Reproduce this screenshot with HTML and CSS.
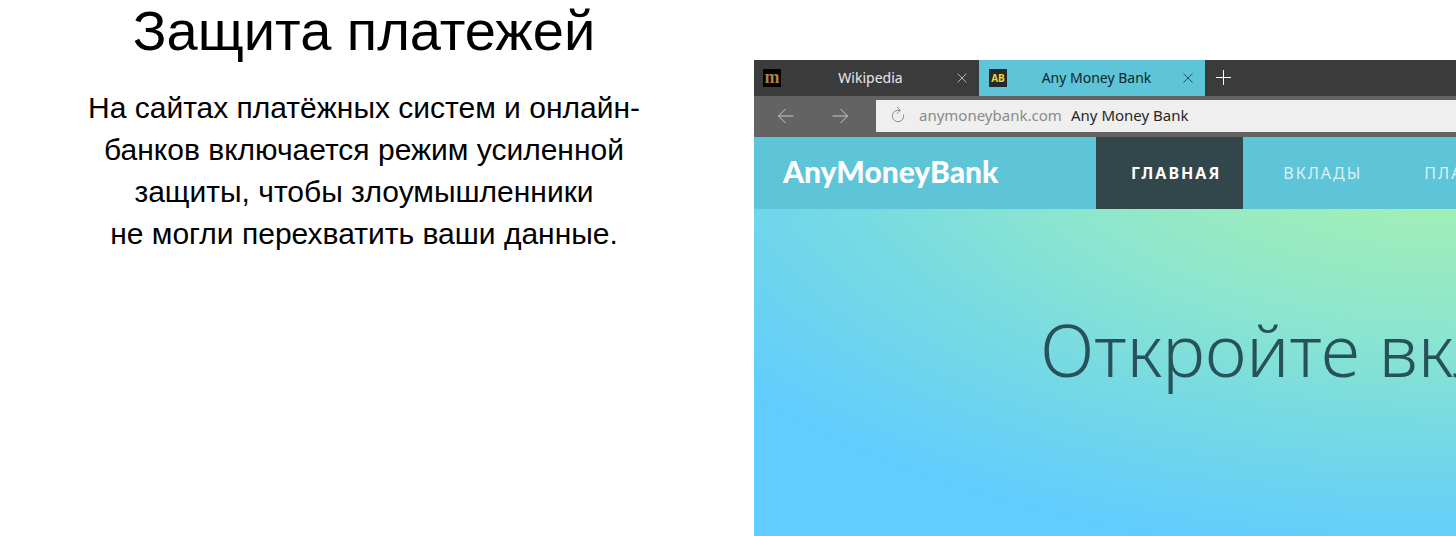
FILE: index.html
```html
<!DOCTYPE html>
<html lang="ru">
<head>
<meta charset="utf-8">
<meta name="viewport" content="width=device-width, initial-scale=1">
<title>Защита платежей</title>
<link rel="stylesheet" href="styles.css">
</head>
<body>
<main class="feature">
  <section class="intro">
    <h1 class="intro-title">Защита платежей</h1>
    <p class="intro-text">На сайтах платёжных систем и онлайн-<br>банков включается режим усиленной<br>защиты, чтобы злоумышленники<br>не&nbsp;могли перехватить ваши данные.</p>
  </section>
  <section class="browser" aria-label="Any Money Bank">
    <div class="tabs">
      <div class="tab">
        <span class="favicon favicon-m">m</span>
        <span class="tab-title">Wikipedia</span>
        <button class="icon-button close" aria-label="Закрыть вкладку"><svg width="12" height="12" viewBox="0 0 12 12"><path d="M1.500 1.500l9 9M10.500 1.500l-9 9"/></svg></button>
      </div>
      <div class="tab tab-active">
        <span class="favicon favicon-ab">AB</span>
        <span class="tab-title">Any Money Bank</span>
        <button class="icon-button close" aria-label="Закрыть вкладку"><svg width="12" height="12" viewBox="0 0 12 12"><path d="M1.500 1.500l9 9M10.500 1.500l-9 9"/></svg></button>
      </div>
      <button class="icon-button new-tab" aria-label="Новая вкладка"><svg width="16" height="16" viewBox="0 0 16 16"><path d="M8.500 0v15M1 7.500h15"/></svg></button>
    </div>
    <div class="toolbar">
      <button class="icon-button arrow" aria-label="Назад"><svg width="18" height="16" viewBox="0 0 18 16"><path d="M16.500 8H1.500M8.500 1L1.500 8l7 7"/></svg></button>
      <button class="icon-button arrow" aria-label="Вперёд"><svg width="18" height="16" viewBox="0 0 18 16"><path d="M1.500 8h15M9.500 1l7 7-7 7"/></svg></button>
      <div class="address">
        <button class="icon-button reload" aria-label="Обновить"><svg width="14" height="17" viewBox="0 0 14 17"><path d="M12.500 8.500A5.700 5.700 0 1 1 7 4.300h2.200M6 1L9.300 4.300L6 7.600"/></svg></button>
        <input class="url" type="text" value="anymoneybank.com" aria-label="Адрес">
        <span class="page-name">Any Money Bank</span>
      </div>
    </div>
    <header class="site-header">
      <a class="logo" href="#">AnyMoneyBank</a>
      <nav class="menu">
        <a class="menu-link menu-current" href="#">ГЛАВНАЯ</a>
        <a class="menu-link" href="#">ВКЛАДЫ</a>
        <a class="menu-link" href="#">ПЛАТЕЖИ</a>
      </nav>
    </header>
    <div class="hero">
      <h2 class="hero-title">Откройте вклад</h2>
    </div>
  </section>
</main>
</body>
</html>
```
FILE: styles.css
```css
* {
  box-sizing: border-box;
}

body {
  margin: 0;
  background: #fff;
  font-family: "Liberation Sans", Arial, sans-serif;
  color: #000;
}

.feature {
  display: grid;
  grid-template-columns: minmax(0, 1fr) minmax(0, 1fr);
  min-height: 100vh;
  overflow: hidden;
}

.intro {
  text-align: center;
}

.intro-title {
  margin: 0;
  font-size: 56px;
  line-height: 62px;
  font-weight: 400;
}

.intro-text {
  margin: 25px 0 0;
  font-size: 30px;
  line-height: 42px;
}

.browser {
  display: flex;
  flex-direction: column;
  margin: 60px 0 0 26px;
  overflow: hidden;
  white-space: nowrap;
  font-family: "Noto Sans", "Open Sans", sans-serif;
}

.icon-button {
  display: flex;
  align-items: center;
  justify-content: center;
  flex: none;
  padding: 0;
  border: 0;
  background: none;
  color: inherit;
}

.icon-button svg {
  fill: none;
  stroke: currentColor;
  stroke-width: 1;
}

.tabs {
  display: flex;
  height: 36px;
  background: #3b3b3b;
  color: #e8e8e8;
}

.tab {
  display: flex;
  align-items: center;
  flex: none;
  width: 225px;
  padding: 0 11px 0 9px;
  font-size: 14px;
  line-height: 34px;
}

.tab-active {
  width: 226px;
  padding-left: 10px;
  background: #5ec4d8;
  color: #10262b;
}

.tab-title {
  flex: 1;
  padding-left: 4px;
  text-align: center;
}

.close {
  opacity: .7;
}

.favicon {
  width: 18px;
  height: 18px;
  text-align: center;
}

.favicon-m {
  background: #000;
  color: #b08148;
  font: bold 18px/16px "Liberation Serif", serif;
}

.favicon-ab {
  background: #222a2c;
  color: #e8dc35;
  font: bold 10px/18px "Open Sans", sans-serif;
}

.new-tab {
  width: 36px;
  color: #fff;
}

.toolbar {
  display: flex;
  align-items: center;
  height: 41px;
  padding: 0 0 2px 5px;
  background: #636363;
}

.arrow {
  width: 54px;
  height: 32px;
  color: #c8c8c8;
}

.address {
  display: flex;
  align-items: center;
  flex: 1;
  height: 32px;
  margin-left: 9px;
  padding: 0 0 2px 15px;
  background: #efefef;
  font-size: 15px;
}

.reload {
  color: #8a8a8a;
}

.url {
  width: 166px;
  padding: 0 0 0 14px;
  border: 0;
  background: none;
  font: inherit;
  color: #8a8a8a;
}

.page-name {
  color: #262626;
}

.site-header {
  display: flex;
  height: 72px;
  background: #5ec4d8;
}

.logo {
  flex: none;
  width: 342px;
  padding-left: 29px;
  color: #fff;
  font: 900 30px/68px Lato, sans-serif;
  text-decoration: none;
}

.menu {
  display: flex;
}

.menu-link {
  padding: 0 22px 0 40px;
  color: #d8f3f8;
  font-size: 16px;
  line-height: 72px;
  letter-spacing: 2px;
  text-decoration: none;
}

.menu-current {
  padding: 0 22px 0 35px;
  background: #32474c;
  color: #fff;
  font-weight: 700;
}

.hero {
  flex: 1;
  min-height: 327px;
  padding: 91px 0 0 286px;
  background: radial-gradient(126% 132% at 100% -28%, #a8f2ac 0%, #a2efb5 20%, #8be5cf 50%, #72d7e8 78%, #60ccff 103%);
}

.hero-title {
  margin: 0;
  font: 300 72px/98px "Noto Sans", "Open Sans", sans-serif;
  color: #28525a;
}
```
